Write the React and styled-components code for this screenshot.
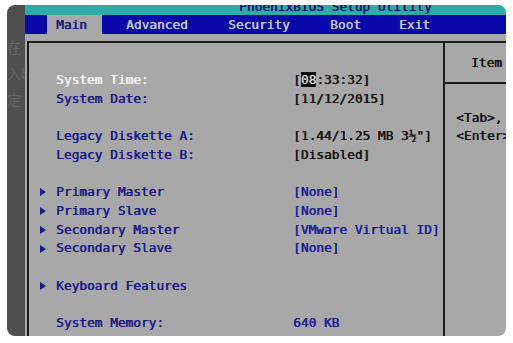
import React from "react";
import styled, { createGlobalStyle } from "styled-components";

const Global = createGlobalStyle`
  html, body { margin: 0; padding: 0; background: #ffffff; }
  body { width: 513px; height: 343px; overflow: hidden; }
`;

const MONO = `"DejaVu Sans Mono", "Liberation Mono", monospace`;

const Frame = styled.div`
  margin: 5px 0 0 7px;
  width: 499px;
  height: 331px;
  border-radius: 8px;
  overflow: hidden;
  display: grid;
  grid-template-columns: 18px 1fr;
  font-family: ${MONO};
  font-weight: normal;
  font-size: 12.8px;
  text-shadow: 0.6px 0 0 currentColor;
`;

const SideStrip = styled.div`
  background: #4f4f4f;
  display: flex;
  flex-direction: column;
  padding-top: 34px;
  gap: 10px;
  overflow: hidden;
  text-shadow: none;
`;

const SideChar = styled.span`
  font-family: "Noto Sans CJK SC", sans-serif;
  font-weight: normal;
  font-size: 14px;
  line-height: 16px;
  color: #646464;
  white-space: nowrap;
`;

const Screen = styled.div`
  display: flex;
  flex-direction: column;
  min-width: 0;
  background: #a8a8a8;
`;

const TitleBar = styled.div`
  height: 10px;
  background: #2aaea6;
  overflow: hidden;
  padding-left: 214px;
`;

const TitleText = styled.div`
  line-height: 18px;
  margin-top: -7px;
  color: #15155e;
  white-space: nowrap;
`;

const MenuBar = styled.div`
  height: 19px;
  background: #0808a8;
  display: flex;
  align-items: stretch;
  padding-left: 22px;
`;

const MenuItem = styled.div`
  width: ${(p) => p.$w}px;
  flex: none;
  padding-left: 9px;
  box-sizing: border-box;
  line-height: 19px;
  white-space: nowrap;
  background: ${(p) => (p.$active ? "#a8a8a8" : "transparent")};
  color: ${(p) => (p.$active ? "#16167e" : "#c4c4d2")};
  margin-right: ${(p) => p.$mr || 0}px;
`;

const BodyArea = styled.div`
  flex: 1;
  padding: 7px 0 0 2px;
  min-height: 0;
`;

const Panel = styled.div`
  height: 100%;
  border-top: 2px solid #1c1c1c;
  border-left: 2px solid #1c1c1c;
  display: grid;
  grid-template-columns: 414px 1fr;
`;

const MainPane = styled.div`
  padding: 28px 0 0 11px;
  display: flex;
  flex-direction: column;
`;

const Row = styled.div`
  height: 18.7px;
  line-height: 18.7px;
  display: grid;
  grid-template-columns: 16px 237px 1fr;
  align-items: center;
  white-space: nowrap;
`;

const Arrow = styled.span`
  width: 0;
  height: 0;
  border-left: 6px solid #1a1a84;
  border-top: 4px solid transparent;
  border-bottom: 4px solid transparent;
`;

const Label = styled.span`
  color: ${(p) => (p.$selected ? "#f4f4f4" : "#1a1a84")};
`;

const Value = styled.span`
  color: ${(p) => (p.$blue ? "#1c1c96" : "#121212")};
`;

const Cursor = styled.span`
  background: #0c0c0c;
  color: #cfcfcf;
`;

const HelpPane = styled.div`
  border-left: 2px solid #1c1c1c;
  display: flex;
  flex-direction: column;
  overflow: hidden;
  min-width: 0;
`;

const HelpHeader = styled.div`
  height: 39px;
  border-bottom: 2px solid #1c1c1c;
  display: flex;
  align-items: center;
  padding-left: 26px;
  color: #121212;
  white-space: nowrap;
`;

const HelpBody = styled.div`
  padding: 24.6px 0 0 11px;
  color: #121212;
  white-space: nowrap;
`;

const HelpLine = styled.div`
  height: 18.7px;
  line-height: 18.7px;
`;

const rows = [
  { label: "System Time:", selected: true, value: "time" },
  { label: "System Date:", value: "[11/12/2015]" },
  null,
  { label: "Legacy Diskette A:", value: "[1.44/1.25 MB  3½\"]" },
  { label: "Legacy Diskette B:", value: "[Disabled]" },
  null,
  { label: "Primary Master", arrow: true, value: "[None]", blue: true },
  { label: "Primary Slave", arrow: true, value: "[None]", blue: true },
  { label: "Secondary Master", arrow: true, value: "[VMware Virtual ID]", blue: true },
  { label: "Secondary Slave", arrow: true, value: "[None]", blue: true },
  null,
  { label: "Keyboard Features", arrow: true },
  null,
  { label: "System Memory:", value: "640 KB", blue: true },
  { label: "Extended Memory:", value: "726256 KB", blue: true },
];

export default function App() {
  return (
    <>
      <Global />
      <Frame>
        <SideStrip>
          <SideChar>在</SideChar>
          <SideChar>入b</SideChar>
          <SideChar>定</SideChar>
        </SideStrip>
        <Screen>
          <TitleBar>
            <TitleText>PhoenixBIOS Setup Utility</TitleText>
          </TitleBar>
          <MenuBar>
            <MenuItem $w={55} $mr={15} $active>Main</MenuItem>
            <MenuItem $w={102}>Advanced</MenuItem>
            <MenuItem $w={102}>Security</MenuItem>
            <MenuItem $w={69}>Boot</MenuItem>
            <MenuItem $w={60}>Exit</MenuItem>
          </MenuBar>
          <BodyArea>
            <Panel>
              <MainPane>
                {rows.map((r, i) =>
                  r ? (
                    <Row key={i}>
                      {r.arrow ? <Arrow /> : <span />}
                      <Label $selected={r.selected}>{r.label}</Label>
                      {r.value === "time" ? (
                        <Value>
                          [<Cursor>08</Cursor>:33:32]
                        </Value>
                      ) : (
                        <Value $blue={r.blue}>{r.value || ""}</Value>
                      )}
                    </Row>
                  ) : (
                    <Row key={i} />
                  )
                )}
              </MainPane>
              <HelpPane>
                <HelpHeader>Item Specific Help</HelpHeader>
                <HelpBody>
                  <HelpLine>&lt;Tab&gt;, &lt;Shift-Tab&gt;, or</HelpLine>
                  <HelpLine>&lt;Enter&gt; selects field.</HelpLine>
                </HelpBody>
              </HelpPane>
            </Panel>
          </BodyArea>
        </Screen>
      </Frame>
    </>
  );
}
